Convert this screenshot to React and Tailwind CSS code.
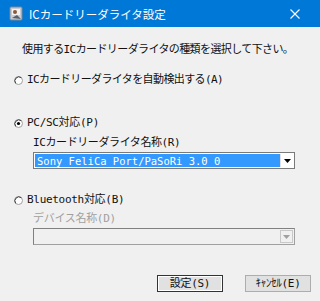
import React from "react";

function Radio({ checked }) {
  return (
    <svg width="9" height="9" viewBox="0 0 9 9" className="shrink-0">
      <circle cx="4.5" cy="4.5" r="4" fill="#ffffff" stroke="#a0a0a0" strokeWidth="1" />
      <path d="M1.7 7.3 A4 4 0 0 1 7.3 1.7" fill="none" stroke="#404040" strokeWidth="1" />
      {checked && <circle cx="4.5" cy="4.5" r="1.6" fill="#000000" />}
    </svg>
  );
}

function Arrow({ color }) {
  return (
    <svg width="7" height="4" viewBox="0 0 7 4">
      <path d="M0 0 H7 L3.5 4 Z" fill={color} />
    </svg>
  );
}

export default function App() {
  return (
    <div className="w-[320px] h-[301px] bg-[#f0f0f0] flex flex-col overflow-hidden text-[11px] leading-[12px] text-[#111111] font-['DejaVu_Sans_Mono','Noto_Sans_CJK_JP',monospace]">
      <div className="h-[27px] bg-[#0078d7] flex items-center pl-[9px] shrink-0 font-['Noto_Sans_CJK_JP',sans-serif]">
        <svg width="15" height="15" viewBox="0 0 15 15" className="shrink-0">
          <rect x="1" y="1" width="12" height="13" rx="1" fill="#c8ccd2" stroke="#7c8590" />
          <rect x="3" y="3" width="8" height="6" fill="#eef0f2" />
          <circle cx="6" cy="6" r="2" fill="#8a5a3c" />
          <path d="M3 12 L8 9 L12 13 Z" fill="#56606a" />
        </svg>
        <span className="ml-[5px] text-white text-[11.5px]">ICカードリーダライタ設定</span>
        <div className="flex-1" />
        <svg width="10" height="10" viewBox="0 0 10 10" className="mr-[20px]">
          <path d="M0.5 0.5 L9.5 9.5 M9.5 0.5 L0.5 9.5" stroke="#ffffff" strokeWidth="1.1" />
        </svg>
      </div>
      <div className="h-px bg-[#e6eef6] shrink-0" />
      <div className="flex flex-col pl-[14px] pr-[25px]">
        <div className="mt-[16px] ml-[8px] tracking-[-0.6px] whitespace-nowrap">使用するICカードリーダライタの種類を選択して下さい。</div>
        <div className="mt-[18px] flex items-center gap-[4px]">
          <Radio />
          <span className="tracking-[-0.6px] whitespace-nowrap">ICカードリーダライタを自動検出する(A)</span>
        </div>
        <div className="mt-[31px] flex items-center gap-[4px]">
          <Radio checked />
          <span className="tracking-[-0.3px]">PC/SC対応(P)</span>
        </div>
        <div className="mt-[8px] ml-[19px] flex flex-col">
          <span className="tracking-[-0.4px] whitespace-nowrap">ICカードリーダライタ名称(R)</span>
          <div className="mt-[3px] h-[17px] flex border border-[#7a7a7a] bg-white p-px">
            <div className="flex-1 bg-[#3399ff] text-white flex items-center pl-[2px] text-[10.5px] tracking-[0px] whitespace-nowrap">
              Sony FeliCa Port/PaSoRi 3.0 0
            </div>
            <div className="w-[13px] flex items-center justify-center bg-white border-l border-[#e0e0e0]">
              <Arrow color="#000000" />
            </div>
          </div>
        </div>
        <div className="mt-[25px] flex items-center gap-[4px]">
          <Radio />
          <span className="tracking-[-0.3px]">Bluetooth対応(B)</span>
        </div>
        <div className="mt-[7px] ml-[19px] flex flex-col">
          <span className="text-[#a0a0a0] tracking-[-0.3px]">デバイス名称(D)</span>
          <div className="mt-[3px] h-[17px] flex border border-[#a0a0a0] border-t-[#808080] border-l-[#808080] bg-[#f0f0f0] p-px">
            <div className="flex-1" />
            <div className="w-[13px] flex items-center justify-center border border-[#c8c8c8]">
              <Arrow color="#a0a0a0" />
            </div>
          </div>
        </div>
        <div className="mt-[30px] flex justify-end gap-[22px] -mr-[16px]">
          <div className="w-[66px] h-[17px] border border-[#333333] bg-[#e1e1e1] flex items-center justify-center shadow-[inset_0_0_0_1px_#ffffff] whitespace-nowrap tracking-[-0.3px]">
            設定(S)
          </div>
          <div className="w-[66px] h-[17px] border border-[#adadad] bg-[#e1e1e1] flex items-center justify-center whitespace-nowrap tracking-[-0.3px]">
            ｷｬﾝｾﾙ(E)
          </div>
        </div>
      </div>
    </div>
  );
}
